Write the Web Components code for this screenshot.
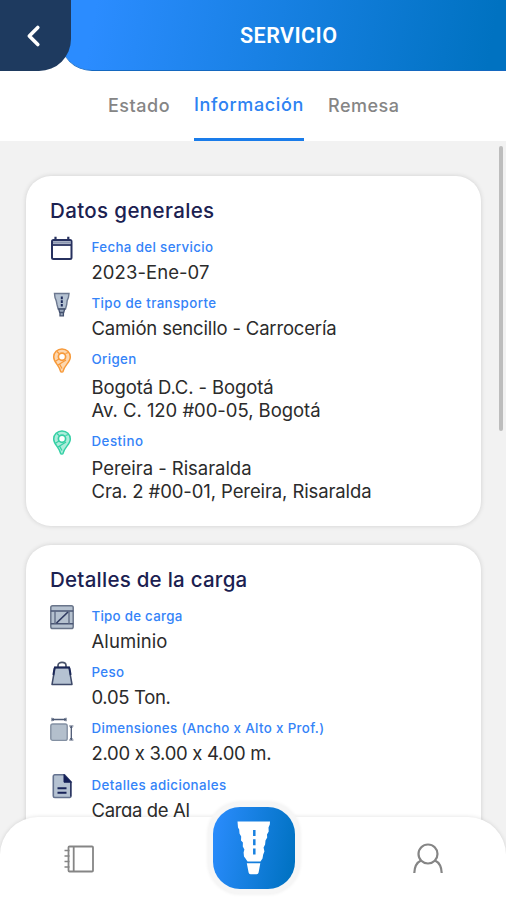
<!DOCTYPE html>
<html lang="es">
<head>
<meta charset="utf-8">
<title>Servicio</title>
<style>
body{margin:0;width:506px;height:900px;overflow:hidden;background:#f2f2f2;font-family:Inter,Roboto,"Liberation Sans",sans-serif}
</style>
</head>
<body>
<service-app></service-app>
<script>
// markup is a string, or a function of the element that returns one.
const define=(name,markup,setup)=>customElements.define(name,class extends HTMLElement{
  connectedCallback(){
    if(this.shadowRoot)return;
    const t=document.createElement('template');
    t.innerHTML=typeof markup==='function'?markup(this):markup;
    this.attachShadow({mode:'open'}).append(t.content.cloneNode(true));
    if(setup)setup.call(this,this.shadowRoot);
  }
});

// One line of text whose tracking is adjusted so that it spans the given width.
define('tracked-text','<style>:host{display:block;white-space:pre}span{display:inline-block}</style><span></span>',function(r){
  const s=r.querySelector('span'),text=this.getAttribute('text');
  s.textContent=text;
  const w=s.getBoundingClientRect().width;
  s.style.letterSpacing=((+this.getAttribute('span')-w)/text.length).toFixed(3)+'px';
});

const icons={
calendar:'<rect x="2" y="4" width="19.500" height="19" rx="1.500" fill="#fff" stroke="#27315f" stroke-width="2"/><path d="M1.500 9h20.500" stroke="#27315f" stroke-width="1.800"/><path d="M3 6.500h18" stroke="#8b96b0" stroke-width="2.500"/><path d="M5.500 .8v4M18.300 .8v4" stroke="#27315f" stroke-width="2.200"/>',
road:'<path d="M4.500 1.500h14.500l-.6 4-1.200 3-.5 4-1.200 4.500h-7.300L7 12.500 6.300 9 5 5.500z" fill="#b5c2d2" stroke="#6c7890" stroke-width="1.400"/><path d="M8.700 17h6l-1 3.500h-4zM10 20.500h3.400v3.300H10z" fill="#9aa8bc" stroke="#44516f" stroke-width="1.300"/><path d="M11.800 4.500v11" stroke="#1c2a5a" stroke-width="2" stroke-dasharray="2.700 1"/>',
pin:'<path d="M12 1C7.300 1 3.700 4.500 3.700 9c0 5.500 5.500 8 6.800 14.200.3 1.200 2.300 1.200 2.600 0C14.400 17 20.300 14.500 20.300 9 20.300 4.500 16.700 1 12 1z" fill="currentColor" fill-opacity=".4" stroke="currentColor" stroke-width="1.500"/><circle cx="12" cy="8.700" r="3.600" fill="#fff" stroke="currentColor" stroke-width="1.700"/><path d="M5 13.500l4-2.500M8 17l8-5M12 20.500l-2.500-4.500M7 3.500l2 2M15.500 5.500l3-1" stroke="currentColor" stroke-width="1.300"/>',
crate:'<rect x=".8" y=".8" width="22.400" height="22.800" rx="1.800" fill="#b5c1cf" stroke="#69758a" stroke-width="1.500"/><path d="M.8 6h22.400M.8 18.800h22.400" stroke="#4b5775" stroke-width="1.400"/><path d="M5 6v13M19 6v13" stroke="#5d6983" stroke-width="1.300"/><path d="M6.500 18L18 7" stroke="#303b62" stroke-width="1.700"/>',
weight:'<path d="M8 6V4.500C8 .3 16 .3 16 4.500V6" fill="none" stroke="#49536a" stroke-width="1.700"/><path d="M5 6.500h14L22 23.500H2z" fill="#b5c2d2" stroke="#3f4a69" stroke-width="1.500" stroke-linejoin="round"/><path d="M4 6.500h16M4.500 7L3.300 14M19.500 7l1.200 7" stroke="#1b2757" stroke-width="1.800"/>',
size:'<rect x=".8" y="7" width="16.400" height="16.400" rx="2" fill="#b3bfcc" stroke="#8390a2" stroke-width="1.400"/><path d="M2 2.500h14M21.300 9v14" stroke="#4c5974" stroke-width="1.300"/><path d="M2 .7v3.600M16 .7v3.600M19.200 9h4.200M19.200 23h4.200" stroke="#4c5974" stroke-width="1.100"/><path d="M4 1l-2 1.500 2 1.500zM14 1l2 1.500-2 1.500zM19.800 11l1.500-2 1.500 2zM19.800 21l1.500 2 1.500-2z" fill="#4c5974"/>',
doc:'<path d="M4.800 .8h9.700l6.300 7v14.700a1 1 0 0 1-1 1h-15a1.500 1.500 0 0 1-1.500-1.500V2.300A1.500 1.500 0 0 1 4.800 .8z" fill="#b5c2d2" stroke="#657390" stroke-width="1.600"/><path d="M14 .5v7.700h7.500z" fill="#141f58" stroke="#141f58"/><path d="M20.800 8v14.500" stroke="#27315f" stroke-width="1.400"/><path d="M7.500 14.200h9M7.500 18.700h9" stroke="#18245a" stroke-width="1.900"/>'
};

define('info-icon',el=>`<style>:host{display:block;width:24px;height:25px}svg{display:block}</style><svg width="24" height="25" viewBox="0 0 24 25" fill="none">${icons[el.getAttribute('name')]}</svg>`);

define('info-row',el=>`<style>
:host{display:grid;grid-template-columns:24px 1fr;column-gap:17.500px;padding-bottom:9.300px}
.label{font-size:13.300px;font-weight:550;line-height:20px;color:#3483f8}
.values{padding-top:var(--lead,4px);font-size:18.500px;line-height:23px;color:#2b2b2b;font-weight:400}
info-icon{margin-top:-1px;margin-left:-.5px}
</style><info-icon name="${el.getAttribute('icon')}"></info-icon><div><tracked-text class="label" text="${el.getAttribute('label')}" span="${el.getAttribute('span')}"></tracked-text><div class="values"><slot></slot></div></div>`);

define('info-card',`<style>
:host{display:block;box-sizing:border-box;background:#fff;border-radius:25px;padding:22.500px 24px 0;box-shadow:0 0 5px rgba(0,0,0,.14)}
h2{margin:0 0 14.200px;font-size:20.500px;line-height:24px;font-weight:550;color:#1b2151}
</style><h2><slot name="title"></slot></h2><slot></slot>`);

define('app-header',`<style>
:host{display:grid;grid-template-columns:60px 1fr;height:71px;background:#fff}
.back{grid-area:1/1;width:71px;height:71px;border-radius:0 0 32px 0;background:#1e3a5f;z-index:1;display:grid;place-items:center;box-sizing:border-box;padding-right:4px}
.bar{grid-area:1/2;border-radius:0 0 0 32px;background:linear-gradient(100deg,#2b8cff 8%,#0072c1 96%);color:#fff;display:flex;align-items:center;box-sizing:border-box;padding:1px 0 0 180px;font-family:Roboto,sans-serif;font-size:21.500px;font-weight:600;border-bottom:1px solid #1468c0}
</style><div class="back"><svg width="20" height="26" viewBox="0 0 20 26" fill="none"><path d="M13.800 4.500L5.300 13l8.500 8.500" stroke="#fff" stroke-width="3.600" stroke-linecap="round" stroke-linejoin="round"/></svg></div>
<div class="bar"><tracked-text text="SERVICIO" span="97.500"></tracked-text></div>`);

define('app-tab',`<style>
:host{display:block;box-sizing:border-box;height:70px;padding-top:23px;line-height:24px;font-size:18px;font-weight:550;color:#858585}
:host([active]){color:#2d82f2;padding-top:22px;border-bottom:3px solid #1a7cea}
</style><slot></slot>`);

define('tab-strip',`<style>:host{display:flex;background:#fff;height:70px;padding-left:108px;gap:24px}</style><slot></slot>`);

define('bottom-nav',`<style>
:host{position:absolute;left:0;right:0;bottom:0;height:83px;background:#fff;border-radius:38px 38px 0 0;box-shadow:0 0 4px rgba(0,0,0,.13);display:grid;grid-template-columns:50px 1fr 50px;padding:0 54px;align-items:center}
svg{display:block}
.fab{justify-self:center;width:82px;height:82px;border-radius:27px;background:linear-gradient(100deg,#298bfb 5%,#0072c2 95%);box-shadow:0 0 0 5px #f6f6f6,0 0 3px 6px #f4f4f4;display:grid;place-items:center;margin-top:-21px;margin-left:2px}
.note{margin:1px 0 0 9px}.user{margin:1px 0 0 10px}
</style>
<svg class="note" width="34" height="32" viewBox="0 0 34 32" fill="none" stroke="#858585" stroke-width="1.800"><rect x="5.500" y="3.500" width="24.500" height="25" rx="1"/><path d="M10.700 3.500v25"/><path d="M1.500 7.500h5M1.500 13h5M1.500 18.500h5M1.500 24h5" stroke-width="1.700"/></svg>
<div class="fab"><svg width="40" height="60" viewBox="0 0 40 60"><path d="M3.500 3.500H36l-.2 3-1.300 3 .2 4-1.700 3 .2 3-1.700 3-.4 4-1.500 3 .8 4-1.200 3-.7 4-2 3H13.500l-2-3-1.500-2-.4-4 .8-3-1.600-3 .1-4-1.900-2 .2-4-1.700-3-.3-4-1.200-2z" fill="#fff"/><path d="M12.800 45.300h13.500l-1.700 9.200a2 2 0 0 1-2 1.700h-6a2 2 0 0 1-2-1.700z" fill="#fff"/><path d="M20.300 12v25" stroke="#1981e0" stroke-width="2.500" stroke-dasharray="6 3.300"/></svg></div>
<svg class="user" width="34" height="34" viewBox="0 0 34 34" fill="none" stroke="#858585" stroke-width="2.200"><circle cx="16" cy="12" r="9.500"/><path d="M9 18.500C4.800 20.500 2.500 25 2.300 31M23 18.500c4.200 2 6.500 6.500 6.700 12.500"/></svg>`);

define('service-app',`<style>
:host{display:block;position:relative;width:506px;height:900px;overflow:hidden}
main{display:flex;flex-direction:column;gap:19px;padding:35px 25px 0 26px}
.first{height:350px}.second{height:360px}
.long{--lead:6.300px}
.orange{color:#f79a3a}.green{color:#35d0a5}
.thumb{position:absolute;left:499px;top:146px;width:3.500px;height:285px;border-radius:2px;background:#bdbdbd}
</style>
<app-header></app-header>
<tab-strip><app-tab><tracked-text text="Estado" span="62"></tracked-text></app-tab><app-tab active><tracked-text text="Información" span="110"></tracked-text></app-tab><app-tab><tracked-text text="Remesa" span="71.500"></tracked-text></app-tab></tab-strip>
<main>
<info-card class="first"><tracked-text slot="title" text="Datos generales" span="164.500"></tracked-text>
<info-row icon="calendar" label="Fecha del servicio" span="122"><tracked-text text="2023-Ene-07" span="118"></tracked-text></info-row>
<info-row icon="road" label="Tipo de transporte" span="125"><tracked-text text="Camión sencillo - Carrocería" span="245"></tracked-text></info-row>
<info-row class="long orange" icon="pin" label="Origen" span="45"><tracked-text text="Bogotá D.C. - Bogotá" span="182"></tracked-text><tracked-text text="Av. C. 120 #00-05, Bogotá" span="229"></tracked-text></info-row>
<info-row class="long green" icon="pin" label="Destino" span="52"><tracked-text text="Pereira - Risaralda" span="160"></tracked-text><tracked-text text="Cra. 2 #00-01, Pereira, Risaralda" span="280"></tracked-text></info-row>
</info-card>
<info-card class="second"><tracked-text slot="title" text="Detalles de la carga" span="197.500"></tracked-text>
<info-row icon="crate" label="Tipo de carga" span="91"><tracked-text text="Aluminio" span="76"></tracked-text></info-row>
<info-row icon="weight" label="Peso" span="33"><tracked-text text="0.05 Ton." span="79"></tracked-text></info-row>
<info-row icon="size" label="Dimensiones (Ancho x Alto x Prof.)" span="233"><tracked-text text="2.00 x 3.00 x 4.00 m." span="184"></tracked-text></info-row>
<info-row icon="doc" label="Detalles adicionales" span="135"><tracked-text text="Carga de Al" span="98"></tracked-text></info-row>
</info-card>
</main>
<div class="thumb"></div>
<bottom-nav></bottom-nav>`);
</script>
</body>
</html>
